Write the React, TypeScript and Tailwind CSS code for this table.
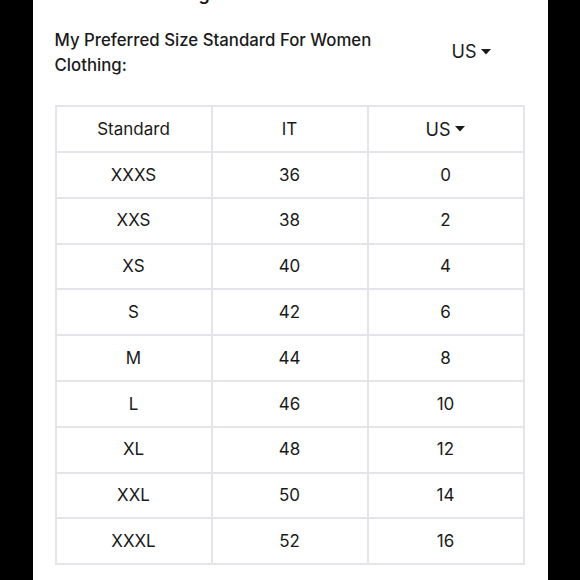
import React from "react";

const rows: [string, string, string][] = [
  ["XXXS", "36", "0"],
  ["XXS", "38", "2"],
  ["XS", "40", "4"],
  ["S", "42", "6"],
  ["M", "44", "8"],
  ["L", "46", "10"],
  ["XL", "48", "12"],
  ["XXL", "50", "14"],
  ["XXXL", "52", "16"],
];

function Caret() {
  return (
    <svg width="10" height="6" viewBox="0 0 10 6" className="ml-[5px]">
      <path d="M0 0 L10 0 L5 5.5 Z" fill="#1a1a1a" />
    </svg>
  );
}

export default function App() {
  return (
    <div
      className="w-[580px] h-[580px] bg-black flex justify-center overflow-hidden"
      style={{ fontFamily: "Inter, 'Liberation Sans', sans-serif" }}
    >
      <div className="w-[515px] h-full bg-white flex flex-col pl-[22px] pr-[23px] text-[#1a1a1a]">
        <div className="h-[4px] overflow-hidden relative">
          <div className="absolute left-[82px] top-[-17px] text-[18px] font-semibold leading-[22px] whitespace-nowrap">
            Clothing
          </div>
        </div>
        <div className="flex items-center mt-[24px]">
          <div className="w-[340px] text-[16.8px] font-medium leading-[25px]">
            My Preferred Size Standard For Women Clothing:
          </div>
          <div className="flex items-center ml-[57px] text-[18px] leading-none -mt-[3px]">
            US
            <Caret />
          </div>
        </div>
        <div className="mt-[27px] grid grid-cols-3 gap-[2px] p-[2px] bg-[#e4e5ea] w-[470px] text-[17px]">
          <div className="bg-white h-[44px] flex items-center justify-center pt-[1px]">Standard</div>
          <div className="bg-white h-[44px] flex items-center justify-center pt-[1px]">IT</div>
          <div className="bg-white h-[44px] flex items-center justify-center text-[18px]">
            US
            <Caret />
          </div>
          {rows.map((r) =>
            r.map((c, i) => (
              <div
                key={r[0] + i}
                className="bg-white h-[43.8px] flex items-center justify-center pt-[1px]"
              >
                {c}
              </div>
            ))
          )}
        </div>
      </div>
    </div>
  );
}
